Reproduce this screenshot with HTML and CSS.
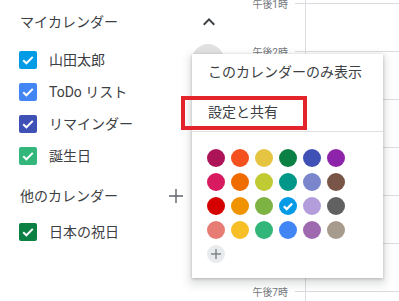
FILE: index.html
```html
<!DOCTYPE html>
<html lang="ja">
<head>
<meta charset="utf-8">
<title>カレンダー</title>
<link rel="stylesheet" href="styles.css">
</head>
<body>
<div class="app">
  <aside class="sidebar">
    <div class="section-head">
      <span class="title">マイカレンダー</span>
      <span class="icon-btn"><svg width="24" height="24" viewBox="0 0 24 24"><path d="M7.41 15.41L12 10.83l4.59 4.58L18 14l-6-6-6 6z" fill="#3c4043"/></svg></span>
    </div>
    <ul class="cal-list">
      <li class="cal-item"><svg class="cb" viewBox="0 0 18 18"><rect width="18" height="18" rx="2" class="c-peacock"/><path d="M4.2 9.2l3.2 3.1 6.4-6.4" class="tick"/></svg><span class="name">山田太郎</span><span class="more-btn"></span></li>
      <li class="cal-item"><svg class="cb" viewBox="0 0 18 18"><rect width="18" height="18" rx="2" class="c-cobalt"/><path d="M4.2 9.2l3.2 3.1 6.4-6.4" class="tick"/></svg><span class="name">ToDo リスト</span></li>
      <li class="cal-item"><svg class="cb" viewBox="0 0 18 18"><rect width="18" height="18" rx="2" class="c-blueberry"/><path d="M4.2 9.2l3.2 3.1 6.4-6.4" class="tick"/></svg><span class="name">リマインダー</span></li>
      <li class="cal-item"><svg class="cb" viewBox="0 0 18 18"><rect width="18" height="18" rx="2" class="c-sage"/><path d="M4.2 9.2l3.2 3.1 6.4-6.4" class="tick"/></svg><span class="name">誕生日</span></li>
    </ul>
    <div class="section-head other">
      <span class="title">他のカレンダー</span>
      <span class="icon-btn plus-btn"><svg width="16" height="16" viewBox="0 0 16 16"><path d="M8 1v14M1 8h14" stroke="#5f6368" stroke-width="1.4" fill="none"/></svg></span>
    </div>
    <ul class="cal-list">
      <li class="cal-item"><svg class="cb" viewBox="0 0 18 18"><rect width="18" height="18" rx="2" class="c-basil"/><path d="M4.2 9.2l3.2 3.1 6.4-6.4" class="tick"/></svg><span class="name">日本の祝日</span></li>
    </ul>
  </aside>
  <main class="timeline">
    <div class="hour"><span class="hour-label">午後1時</span><span class="hour-line"></span></div>
    <div class="hour"><span class="hour-label">午後2時</span><span class="hour-line"></span></div>
    <div class="hour"><span class="hour-label">午後3時</span><span class="hour-line"></span></div>
    <div class="hour"><span class="hour-label">午後4時</span><span class="hour-line"></span></div>
    <div class="hour"><span class="hour-label">午後5時</span><span class="hour-line"></span></div>
    <div class="hour"><span class="hour-label">午後6時</span><span class="hour-line"></span></div>
    <div class="hour last"><span class="hour-label">午後7時</span><span class="hour-line"></span></div>
  </main>
</div>

<div class="menu">
  <div class="menu-item first">このカレンダーのみ表示</div>
  <div class="menu-item second">設定と共有</div>
  <div class="palette">
    <span class="swatch" style="background:#ad1457"></span>
    <span class="swatch" style="background:#f4511e"></span>
    <span class="swatch" style="background:#e4c441"></span>
    <span class="swatch" style="background:#0b8043"></span>
    <span class="swatch" style="background:#3f51b5"></span>
    <span class="swatch" style="background:#8e24aa"></span>
    <span class="swatch" style="background:#d81b60"></span>
    <span class="swatch" style="background:#ef6c00"></span>
    <span class="swatch" style="background:#c0ca33"></span>
    <span class="swatch" style="background:#009688"></span>
    <span class="swatch" style="background:#7986cb"></span>
    <span class="swatch" style="background:#795548"></span>
    <span class="swatch" style="background:#d50000"></span>
    <span class="swatch" style="background:#f09300"></span>
    <span class="swatch" style="background:#7cb342"></span>
    <span class="swatch" style="background:#039be5"><svg width="18" height="18" viewBox="0 0 18 18"><path d="M4.8 9.3l2.9 2.8 5.5-5.6" stroke="#fff" stroke-width="2.2" fill="none"/></svg></span>
    <span class="swatch" style="background:#b39ddb"></span>
    <span class="swatch" style="background:#616161"></span>
    <span class="swatch" style="background:#e67c73"></span>
    <span class="swatch" style="background:#f6bf26"></span>
    <span class="swatch" style="background:#33b679"></span>
    <span class="swatch" style="background:#4285f4"></span>
    <span class="swatch" style="background:#9e69af"></span>
    <span class="swatch" style="background:#a79b8e"></span>
    <span class="swatch add"><svg width="18" height="18" viewBox="0 0 18 18"><path d="M9 4v10M4 9h10" stroke="#80868b" stroke-width="1.5" fill="none"/></svg></span>
  </div>
</div>

<div class="annotation"></div>
</body>
</html>
```

FILE: styles.css
```css
* { box-sizing: border-box; }

html, body {
  height: 301px;
  overflow: hidden;
}

body {
  margin: 0;
  width: 399px;
  position: relative;
  background: #fff;
  color: #3c4043;
  font-family: Roboto, "Noto Sans CJK JP", sans-serif;
}

.app {
  display: flex;
  height: 301px;
  overflow: hidden;
}

.sidebar {
  width: 232px;
  flex: none;
}

.section-head {
  display: flex;
  align-items: center;
  height: 44px;
  padding: 0 7px 0 20px;
  font-size: 14px;
  line-height: 20px;
}

.section-head .title { flex: 1; }

.section-head.other {
  margin-top: 4px;
  height: 40px;
}

.icon-btn {
  width: 32px;
  height: 32px;
  display: flex;
  align-items: center;
  justify-content: center;
}

.plus-btn { margin-right: 33px; }

.cal-list {
  list-style: none;
  margin: 0;
  padding: 0;
}

.cal-item {
  display: flex;
  align-items: center;
  height: 32px;
  padding: 0 8px 0 19px;
  font-size: 14px;
  line-height: 20px;
}

.cb {
  width: 18px;
  height: 18px;
  margin-right: 12px;
  flex: none;
}

.cb .tick {
  fill: none;
  stroke: #fff;
  stroke-width: 2;
}

.c-peacock { fill: #039be5; }
.c-cobalt { fill: #4285f4; }
.c-blueberry { fill: #3f51b5; }
.c-sage { fill: #33b679; }
.c-basil { fill: #0b8043; }

.more-btn {
  margin-left: auto;
  width: 32px;
  height: 32px;
  border-radius: 50%;
  background: #e2e2e2;
}

.timeline {
  flex: 1;
  height: 301px;
  overflow: hidden;
  padding-top: 3px;
  background: linear-gradient(#dadce0, #dadce0) no-repeat 73px 0 / 1px 100%;
}

.hour {
  height: 48px;
  display: grid;
  grid-template-columns: 63px 1fr;
  align-items: start;
}

.hour.last { height: 10px; }

.hour-label {
  margin-top: -4px;
  height: 12px;
  padding-right: 7px;
  text-align: right;
  font-size: 10px;
  line-height: 12px;
  color: #70757a;
}

.hour-line {
  border-top: 1px solid #dadce0;
}

.menu {
  position: absolute;
  left: 192px;
  top: 54px;
  width: 191px;
  background: #fff;
  padding-bottom: 15px;
  box-shadow: 0 1px 3px rgba(60, 64, 67, 0.3), 0 4px 8px 3px rgba(60, 64, 67, 0.15);
}

.menu-item {
  display: flex;
  align-items: center;
  padding-left: 16px;
  font-size: 14px;
  line-height: 20px;
  color: #3c4043;
}

.menu-item.first { height: 36px; }

.menu-item.second {
  margin-top: 2px;
  height: 40px;
  border-bottom: 1px solid #e0e0e0;
}

.palette {
  display: grid;
  grid-template-columns: repeat(6, 18px);
  gap: 6px;
  padding: 17px 0 0 15px;
}

.swatch {
  width: 18px;
  height: 18px;
  border-radius: 50%;
  display: flex;
}

.swatch.add { background: #e8eaed; }

.annotation {
  position: absolute;
  left: 181px;
  top: 96px;
  width: 126px;
  height: 34px;
  border: 4px solid #e3242b;
}
```
